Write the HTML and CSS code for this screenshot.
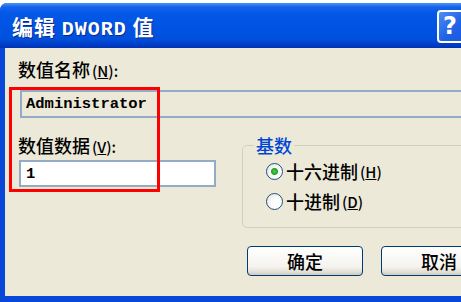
FILE: index.html
```html
<!DOCTYPE html>
<html lang="zh-CN">
<head>
    <meta charset="UTF-8">
    <title>编辑 DWORD 值</title>
    <link rel="stylesheet" href="styles.css">
</head>
<body>
    <div class="window">
        <div class="titlebar">
            <span class="title">编辑 <span class="mono">DWORD</span> 值</span>
            <span class="help">?</span>
        </div>
        <div class="client">
            <div class="label">数值名称<span class="key">(<u>N</u>):</span></div>
            <div class="field readonly">Administrator</div>

            <div class="row">
                <div class="col">
                    <div class="label">数值数据<span class="key">(<u>V</u>):</span></div>
                    <div class="field data">1</div>
                </div>
                <fieldset class="group">
                    <legend>基数</legend>
                    <div class="radio-row"><span class="radio checked"></span>十六进制<span class="key">(<u>H</u>)</span></div>
                    <div class="radio-row"><span class="radio"></span>十进制<span class="key">(<u>D</u>)</span></div>
                </fieldset>
            </div>

            <div class="buttons">
                <button>确定</button>
                <button>取消</button>
            </div>

            <!-- red highlight over the name/data fields -->
            <div class="highlight"></div>
        </div>
    </div>
</body>
</html>
```

FILE: styles.css
```css
html, body {
    margin: 0;
    padding: 0;
    background: #fff;
    overflow: hidden;
}
body {
    width: 461px;
    height: 302px;
    font-family: "Noto Sans CJK SC", "DejaVu Sans", sans-serif;
}
.window {
    margin-top: 3px;
    width: 474px;
    height: 299px;
    background: #0848d8;
    border-radius: 7px 7px 0 0;
    display: flex;
    flex-direction: column;
    box-sizing: border-box;
    padding: 0 0 6px 5px;
}
.titlebar {
    height: 45px;
    margin-left: -5px;
    border-radius: 7px 7px 0 0;
    background: linear-gradient(#4a95f8 0, #1563ea 4px, #0458e8 10px, #0054e3 50%, #0050dc 80%, #003bc4 94%, #0030b0 100%);
    display: flex;
    align-items: center;
    justify-content: space-between;
    padding: 0 0 0 12px;
}
.title {
    color: #fff;
    font-size: 21px;
    font-weight: bold;
    text-shadow: 1px 1px 0 #0a2a8c;
    letter-spacing: 1px;
}
.mono {
    font-family: "Liberation Mono", monospace;
    font-size: 20px;
}
.help {
    width: 29px;
    height: 29px;
    margin-top: 1px;
    border: 2px solid #fff;
    border-radius: 4px;
    background: linear-gradient(135deg, #4f8cf5, #2062e6 50%, #1a55d8);
    color: #fff;
    font: bold 24px/29px "DejaVu Sans", sans-serif;
    text-align: left;
    padding-left: 4px;
    box-sizing: content-box;
}
.client {
    flex: 1;
    position: relative;
    background: #ece9d8;
    padding: 10px 0 0 14px;
    font-size: 18px;
    font-weight: 500;
    color: #000;
}
.label {
    height: 22px;
    line-height: 22px;
    margin-left: -1px;
}
.key {
    font-size: 15px;
    margin-left: 2px;
}
.field {
    box-sizing: border-box;
    height: 28px;
    border: 2px solid #93abc6;
    padding: 0 4px;
    font: bold 15.5px/24px "Liberation Mono", monospace;
}
.readonly {
    margin: 10px 0 0 1px;
    background: #ece9d8;
}
.row {
    display: flex;
    gap: 26px;
    margin-top: 16px;
}
.col {
    width: 197px;
}
.data {
    margin-top: 4px;
    height: 27px;
    background: #fff;
    padding-left: 5px;
}
.group {
    flex: 1;
    margin: 0;
    padding: 0 0 11px 23px;
    border: 1px solid #d0d0bf;
    border-radius: 5px;
}
.group legend {
    margin-left: -12px;
    padding: 0 2px;
    color: #0046d5;
    line-height: 22px;
}
.radio-row {
    height: 30px;
    display: flex;
    align-items: center;
}
.radio {
    width: 15px;
    height: 15px;
    margin-right: 3px;
    border: 1px solid #1c5180;
    border-radius: 50%;
    background: radial-gradient(circle at 65% 65%, #fff 30%, #e2e0d6 100%);
}
.radio.checked {
    background: radial-gradient(circle, #4cd24c 0, #21a121 3px, transparent 4px),
                radial-gradient(circle at 65% 65%, #fff 30%, #e2e0d6 100%);
}
.buttons {
    display: flex;
    gap: 18px;
    margin: 18px 0 0 228px;
}
.buttons button {
    width: 116px;
    height: 30px;
    border: 1px solid #003c74;
    border-radius: 4px;
    background: linear-gradient(#fff, #f4f3ee 70%, #d8d3c8);
    box-shadow: inset 0 -2px 0 #d6d0c5;
    font: 500 18px "Noto Sans CJK SC", sans-serif;
    color: #000;
    padding: 0;
    flex-shrink: 0;
}
.highlight {
    position: absolute;
    left: 4px;
    top: 39px;
    width: 145px;
    height: 99px;
    border: 3px solid #f00;
}
```
